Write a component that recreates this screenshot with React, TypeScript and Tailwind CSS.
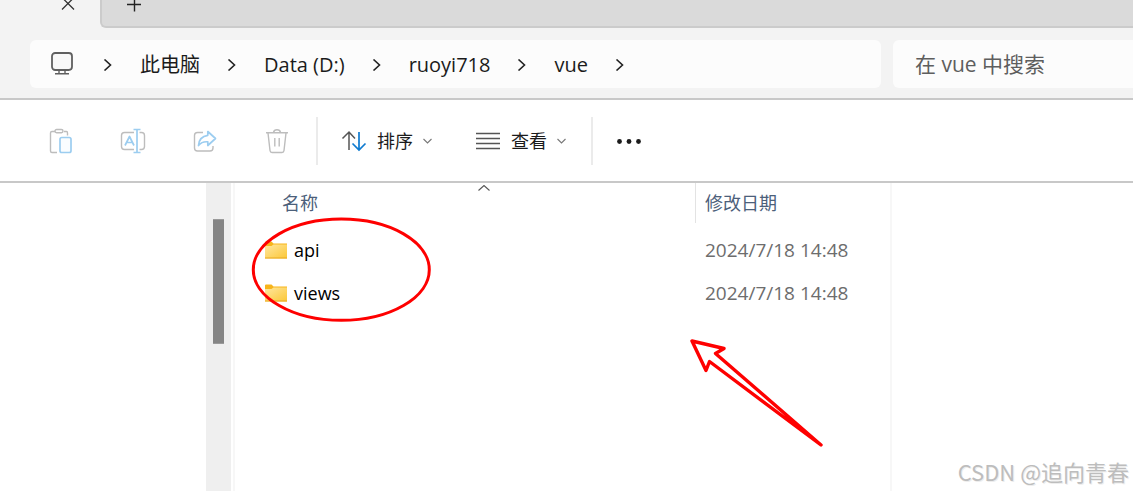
import type { ReactNode } from 'react';

interface FileEntry {
  name: string;
  modified: string;
}

const crumbs = ['此电脑', 'Data (D:)', 'ruoyi718', 'vue'];

const files: FileEntry[] = [
  { name: 'api', modified: '2024/7/18 14:48' },
  { name: 'views', modified: '2024/7/18 14:48' },
];

export default function App() {
  return (
    <div className="min-h-screen flex flex-col overflow-hidden bg-white text-[#1b1b1b] font-['Open_Sans','Noto_Sans_CJK_SC',sans-serif]">
      <TabStrip />
      <AddressBar />
      <Toolbar />
      <main className="relative flex-1 flex">
        <aside className="w-[206px] shrink-0" />
        <div className="w-[25px] shrink-0 bg-[#efefef] pt-9">
          <div className="mx-auto w-[11px] h-[125px] bg-[#858585] border-y border-[#9a9a9a]" />
        </div>
        <div className="ml-0.5 shrink-0 border-x-2 border-[#f7f7f7]">
          <FileTable />
        </div>
        <Annotations />
        <p className="absolute right-1 bottom-1 text-[22px] leading-8 text-[#bdbdbd] font-['Noto_Sans_CJK_SC',sans-serif] [text-shadow:1px_1px_0_#ededed]">
          CSDN @追向青春
        </p>
      </main>
    </div>
  );
}

function TabStrip() {
  return (
    <div className="flex h-7 bg-[#f3f3f3]">
      <div className="w-[100px] flex justify-end pr-[25px]">
        <button aria-label="关闭" className="h-2.5">
          <svg width="14" height="12" viewBox="0 0 14 12" fill="none" stroke="#333" strokeWidth="1.3">
            <path d="M1 -2.5 L13 9.5 M13 -2.5 L1 9.5" />
          </svg>
        </button>
      </div>
      <div className="flex-1 bg-[#dadada] border-l-2 border-b-2 border-[#cbcbcb] rounded-bl-md pl-6">
        <button aria-label="新标签页" className="block h-3">
          <svg width="16" height="12" viewBox="0 0 16 12" fill="none" stroke="#222" strokeWidth="1.4">
            <path d="M1 4.5 H15 M8.5 -3 V11.5" />
          </svg>
        </button>
      </div>
    </div>
  );
}

function Separator() {
  return (
    <svg className="w-16 h-3" viewBox="0 0 64 12" fill="none" stroke="#222" strokeWidth="1.6" aria-hidden="true">
      <path d="M28.5 0.5 L34.5 6 L28.5 11.5" />
    </svg>
  );
}

function AddressBar() {
  return (
    <div className="flex gap-3 bg-[#f3f3f3] border-b-2 border-[#c8c8c8] pl-[30px] pt-3 pb-2.5">
      <nav className="flex-1 h-12 flex items-center rounded-md bg-[#fcfcfc] pl-[21px] pt-0.5 text-xl whitespace-nowrap">
        <button aria-label="此电脑" className="mr-[3px] mb-1">
          <svg width="22" height="23" viewBox="0 0 22 23" fill="none" stroke="#5f5f5f" strokeWidth="1.8">
            <rect x="1" y="1" width="20" height="17" rx="3.2" fill="#f8f8f8" />
            <path d="M8 18 V21.5 M14 18 V21.5 M4 21.8 H18" strokeWidth="1.4" />
          </svg>
        </button>
        <Separator />
        {crumbs.map(crumb => (
          <div key={crumb} className="flex items-center">
            <button>{crumb}</button>
            <Separator />
          </div>
        ))}
      </nav>
      <input
        type="search"
        aria-label="搜索"
        placeholder="在 vue 中搜索"
        className="w-60 h-12 rounded-l-md bg-[#fcfcfc] pl-[22px] text-[21px] placeholder:text-[#5e5e5e] outline-none"
      />
    </div>
  );
}

function IconButton({ label, children }: { label: string; children: ReactNode }) {
  return (
    <button aria-label={label} className="w-[72px] h-12 flex items-center justify-center">
      <svg width="26" height="26" viewBox="0 0 26 26" fill="none" stroke="#bdbdbd" strokeWidth="1.4" strokeLinejoin="round">
        {children}
      </svg>
    </button>
  );
}

function MenuButton({ label, children }: { label: string; children: ReactNode }) {
  return (
    <button className="h-12 flex items-center text-lg">
      <svg width="26" height="24" viewBox="0 0 26 24" fill="none" stroke="#555" strokeWidth="1.5">
        {children}
      </svg>
      <span className="ml-2.5">{label}</span>
      <svg className="ml-2.5" width="9" height="6" viewBox="0 0 9 6" fill="none" stroke="#777" strokeWidth="1.1">
        <path d="M0.5 1 L4.5 5 L8.5 1" />
      </svg>
    </button>
  );
}

function Toolbar() {
  return (
    <div className="flex items-center border-b-2 border-[#c8c8c8] pl-[25px] pt-[17px] pb-4">
      <IconButton label="粘贴">
        <path d="M7 3.5 H4 Q2.5 3.5 2.5 5 V23 Q2.5 24.5 4 24.5 H9 M16 3.5 H18.5 Q19.5 3.5 19.5 5 V7.5" />
        <rect x="7" y="1.5" width="8" height="3.2" rx="1.6" />
        <rect x="12" y="9.5" width="11" height="15" rx="1.8" stroke="#9ccdf0" strokeWidth="1.7" fill="#fafdff" />
      </IconButton>
      <IconButton label="重命名">
        <path d="M14 4.5 H4.5 Q1.5 4.5 1.5 7.5 V18.5 Q1.5 21.5 4.5 21.5 H14 M19.5 4.5 H21.5 Q24.5 4.5 24.5 7.5 V18.5 Q24.5 21.5 21.5 21.5 H19.5" />
        <path d="M5 17.5 L9.5 8.5 L14 17.5 M6.7 14.5 H12.3 M13.5 1.5 H20.5 M17 1.5 V24.5 M13.5 24.5 H20.5" stroke="#9ccdf0" strokeWidth="1.7" />
      </IconButton>
      <IconButton label="共享">
        <path d="M11 4.5 H5.5 Q2.5 4.5 2.5 7.5 V20 Q2.5 23 5.5 23 H18 Q21 23 21 20 V18" />
        <path d="M15.8 3.5 L23.5 10.5 L15.8 17.5 V13.8 Q10 13.2 6.5 17.5 Q7 8.5 15.8 7.3 Z" stroke="#9ccdf0" strokeWidth="1.7" />
      </IconButton>
      <IconButton label="删除">
        <path d="M2 4.8 H24 M9.5 4.5 Q10 1.8 13 1.8 Q16 1.8 16.5 4.5 M4 5 L6 22.5 Q6.2 24.5 8 24.5 H18 Q19.8 24.5 20 22.5 L22 5 M10.8 10 V18.5 M15.2 10 V18.5" />
      </IconButton>
      <div className="w-0.5 h-12 ml-[3px] mr-[23px] bg-[#ebebeb]" />
      <MenuButton label="排序">
        <path d="M8 21 V3.5 M1.5 9.5 L8 3 L14 9.5" />
        <path d="M18 3 V20.5 M11.5 14.5 L18 21 L24.5 14.5" stroke="#0f7bd0" strokeWidth="1.7" />
      </MenuButton>
      <div className="w-[43px]" />
      <MenuButton label="查看">
        <path d="M1 4.5 H25 M1 9.5 H25 M1 14.5 H25 M1 19.5 H25" />
      </MenuButton>
      <div className="w-0.5 h-12 ml-[25px] mr-6 bg-[#ebebeb]" />
      <button aria-label="更多">
        <svg width="24" height="6" viewBox="0 0 24 6" fill="#1b1b1b">
          <circle cx="2.5" cy="3.5" r="2.4" />
          <circle cx="12" cy="3.5" r="2.4" />
          <circle cx="21.5" cy="3.5" r="2.4" />
        </svg>
      </button>
    </div>
  );
}

function FolderIcon() {
  return (
    <svg width="22" height="18" viewBox="0 0 22 18" aria-hidden="true">
      <defs>
        <linearGradient id="folder" x1="0" y1="0" x2="1" y2="1">
          <stop offset="0" stopColor="#ffe7a0" />
          <stop offset="1" stopColor="#fbc736" />
        </linearGradient>
      </defs>
      <path d="M0 1.5 Q0 0.5 1 0.5 H6.5 L8.5 2.5 H22 V6 H0 Z" fill="#f7b51c" />
      <path d="M0 5 H6.5 L8.5 3.5 H22 V17.5 H0 Z" fill="url(#folder)" />
      <path d="M0 16.5 H22 V17.5 H0 Z" fill="#e9a921" />
    </svg>
  );
}

function FileTable() {
  return (
    <table className="table-fixed w-[655px] text-left text-lg leading-6">
      <thead>
        <tr className="h-[45px] align-top text-[#4c607a]">
          <th scope="col" className="w-[460px] pl-[38px] font-normal">
            <button className="relative w-full h-10 pl-[9px] text-left">
              名称
              {/* ascending sort marker */}
              <svg className="absolute top-0.5 left-1/2 -translate-x-1/2" width="12" height="6" viewBox="0 0 12 6" fill="none" stroke="#555" strokeWidth="1.1">
                <path d="M0.5 5.5 L6 0.5 L11.5 5.5" />
              </svg>
            </button>
          </th>
          <th scope="col" className="font-normal">
            <button className="w-full h-10 pl-[9px] text-left border-l border-[#e3e3e3]">修改日期</button>
          </th>
        </tr>
      </thead>
      <tbody>
        {files.map(file => (
          <tr key={file.name} className="h-[43px]">
            <td className="pl-[30px] text-black">
              <div className="flex items-center gap-[7px]">
                <FolderIcon />
                {file.name}
              </div>
            </td>
            <td className="pl-[10px] text-[19px] text-[#6d6d6d]">{file.modified}</td>
          </tr>
        ))}
      </tbody>
    </table>
  );
}

function Annotations() {
  return (
    <svg className="absolute left-0 top-0 pointer-events-none" width="860" height="280" viewBox="0 0 860 280" fill="none" stroke="#fe0000" strokeWidth="3" strokeLinejoin="round" aria-hidden="true">
      <ellipse cx="341.3" cy="86.7" rx="88" ry="50.6" />
      <path d="M692 158 L724 165.5 L715.5 170.5 L821 262 L709.5 178.5 L706 187.5 Z" strokeWidth="3.4" />
    </svg>
  );
}
